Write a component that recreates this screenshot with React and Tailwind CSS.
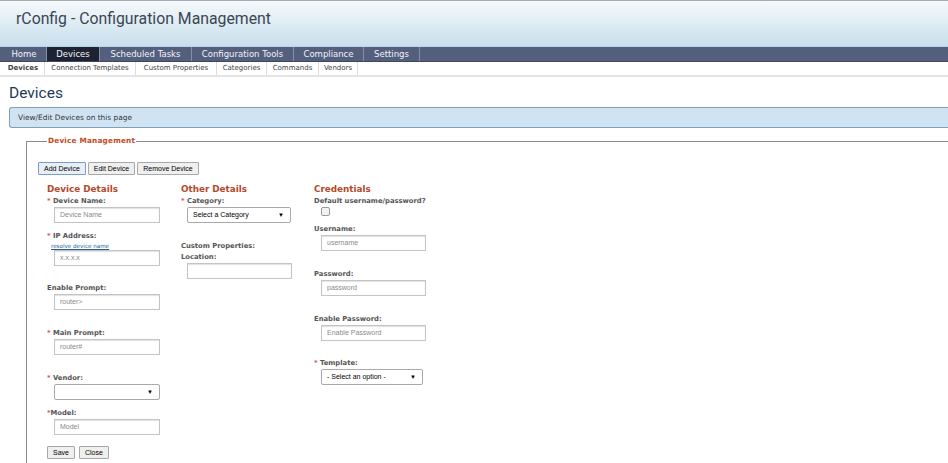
import { useState } from "react";

const navItems = [
  { label: "Home", w: "w-[45px]" },
  { label: "Devices", w: "w-[53px]", active: true },
  { label: "Scheduled Tasks", w: "w-[92px]" },
  { label: "Configuration Tools", w: "w-[102px]" },
  { label: "Compliance", w: "w-[70px]" },
  { label: "Settings", w: "w-[56px]" },
];

const subItems = [
  { label: "Devices", w: "w-[43px]", bold: true },
  { label: "Connection Templates", w: "w-[91px]" },
  { label: "Custom Properties", w: "w-[81px]" },
  { label: "Categories", w: "w-[50px]" },
  { label: "Commands", w: "w-[52px]" },
  { label: "Vendors", w: "w-[39px]" },
];

function Label({ children, req, tight, className = "" }) {
  return (
    <div
      className={`h-[11px] leading-[11px] text-[6.8px] font-bold text-[#555] font-['DejaVu_Sans',sans-serif] whitespace-nowrap ${className}`}
    >
      {req && <span className="text-[#e0505a]">*{tight ? "" : " "}</span>}
      {children}
    </div>
  );
}

function Input({ placeholder, w = "w-[106px]", className = "" }) {
  return (
    <input
      placeholder={placeholder}
      className={`${w} h-[16px] block border border-[#c4c4c4] bg-white px-[5px] text-[7px] font-['Liberation_Sans',Arial,sans-serif] text-[#333] placeholder:text-[#8a8a8a] shadow-[inset_0_1px_1px_rgba(0,0,0,0.12)] outline-none ${className}`}
    />
  );
}

function Select({ text, w = "w-[106px]", className = "" }) {
  return (
    <div
      className={`${w} h-[16px] flex items-center justify-between border border-[#a9a9a9] rounded-[2px] bg-white pl-[5px] pr-[6px] text-[7px] text-black font-['Liberation_Sans',Arial,sans-serif] ${className}`}
    >
      <span>{text}</span>
      <span className="text-[6px] leading-none">▼</span>
    </div>
  );
}

function Button({ children, focus }) {
  return (
    <button
      className={`h-[13px] px-[5px] border ${
        focus ? "border-[#7a9cc6] bg-[#e8eef6]" : "border-[#a8a8a8] bg-[#efefef]"
      } rounded-[1px] text-[7px] leading-none text-black font-['Liberation_Sans',Arial,sans-serif]`}
    >
      {children}
    </button>
  );
}

function Heading({ children }) {
  return (
    <div className="h-[12px] leading-[12px] text-[8.8px] font-bold text-[#b5482a] font-['DejaVu_Sans',sans-serif] whitespace-nowrap">
      {children}
    </div>
  );
}

export default function App() {
  const [checked, setChecked] = useState(false);

  return (
    <div className="h-[463px] w-full overflow-hidden bg-white font-['DejaVu_Sans',sans-serif]">
      {/* header */}
      <header className="h-[47px] border-t border-[#a3adb5] border-b border-b-[#b6d4e6] bg-linear-to-b from-[#f6f9fb] to-[#c7dfed] pl-[16px] pt-[7px]">
        <h1 className="text-[15.8px] leading-[22px] text-[#3b4652] font-['Roboto',sans-serif]">
          rConfig - Configuration Management
        </h1>
      </header>

      {/* main nav */}
      <nav className="h-[15px] bg-[#545f7d] flex pl-[2px] border-b border-[#3f4860]">
        {navItems.map((it) => (
          <div
            key={it.label}
            className={`${it.w} flex items-center justify-center border-r border-[#8590a8] text-[8.5px] text-[#f2f4f8] whitespace-nowrap ${
              it.active ? "bg-[#1e2333]" : ""
            }`}
          >
            {it.label}
          </div>
        ))}
      </nav>

      {/* sub nav */}
      <div className="h-[15px] flex pl-[2px] border-b-2 border-[#e3e3e3]">
        {subItems.map((it) => (
          <div
            key={it.label}
            className={`${it.w} flex items-center justify-center border-r border-[#dcdcdc] text-[7px] text-[#444] whitespace-nowrap ${
              it.bold ? "font-bold" : ""
            }`}
          >
            {it.label}
          </div>
        ))}
      </div>

      {/* page title */}
      <h2 className="pl-[9px] mt-[6px] h-[21px] leading-[21px] text-[15.5px] text-[#1c3a58] font-['Roboto',sans-serif]">
        Devices
      </h2>

      <div className="ml-[9px] mt-[3px] h-[21px] flex items-center border border-r-0 border-[#7fa0ba] rounded-l-[3px] bg-[#d0e3f3] pl-[8px] text-[7.4px] text-[#333]">
        View/Edit Devices on this page
      </div>

      {/* fieldset */}
      <fieldset className="ml-[26px] mt-[8px] border-t border-l border-[#8c8c8c] pl-[11px] pt-[15px] pb-[40px]">
        <legend className="ml-[9px] px-px text-[7.3px] font-bold text-[#c04a22] tracking-[0.2px]">
          Device Management
        </legend>

        <div className="flex gap-[2px]">
          <Button focus>Add Device</Button>
          <Button>Edit Device</Button>
          <Button>Remove Device</Button>
        </div>

        <div className="flex pl-[9px] mt-[8px]">
          {/* device details */}
          <div className="w-[134px]">
            <Heading>Device Details</Heading>
            <Label req className="mt-[1px]">Device Name:</Label>
            <Input placeholder="Device Name" className="ml-[7px]" />

            <Label req className="mt-[8px]">IP Address:</Label>
            <a className="block h-[8px] leading-[8px] text-[5.6px] text-[#1f5f93] underline ml-[4px]" href="#">
              resolve device name
            </a>
            <Input placeholder="x.x.x.x" className="ml-[7px]" />

            <Label className="mt-[17px]">Enable Prompt:</Label>
            <Input placeholder="router>" className="ml-[7px]" />

            <Label req className="mt-[18px]">Main Prompt:</Label>
            <Input placeholder="router#" className="ml-[7px]" />

            <Label req className="mt-[18px]">Vendor:</Label>
            <Select text="" className="ml-[7px]" />

            <Label req tight className="mt-[8px]">Model:</Label>
            <Input placeholder="Model" className="ml-[7px]" />

            <div className="flex gap-[4px] mt-[11px]">
              <Button>Save</Button>
              <Button>Close</Button>
            </div>
          </div>

          {/* other details */}
          <div className="w-[133px]">
            <Heading>Other Details</Heading>
            <Label req className="mt-[1px]">Category:</Label>
            <Select text="Select a Category" w="w-[104px]" className="ml-[6px]" />

            <Label className="mt-[18px]">Custom Properties:</Label>
            <Label>Location:</Label>
            <Input w="w-[105px]" className="ml-[6px]" />
          </div>

          {/* credentials */}
          <div className="w-[140px]">
            <Heading>Credentials</Heading>
            <Label className="mt-[1px]">Default username/password?</Label>
            <input
              type="checkbox"
              checked={checked}
              onChange={() => setChecked(!checked)}
              className="block ml-[7px] w-[9px] h-[9px] m-0 appearance-none border border-[#9a9a9a] rounded-[2px] bg-[#f3f3f3]"
            />

            <Label className="mt-[8px]">Username:</Label>
            <Input placeholder="username" w="w-[105px]" className="ml-[7px]" />

            <Label className="mt-[18px]">Password:</Label>
            <Input placeholder="password" w="w-[105px]" className="ml-[7px]" />

            <Label className="mt-[18px]">Enable Password:</Label>
            <Input placeholder="Enable Password" w="w-[105px]" className="ml-[7px]" />

            <Label req className="mt-[17px]">Template:</Label>
            <Select text="- Select an option -" w="w-[102px]" className="ml-[7px]" />
          </div>
        </div>
      </fieldset>
    </div>
  );
}
